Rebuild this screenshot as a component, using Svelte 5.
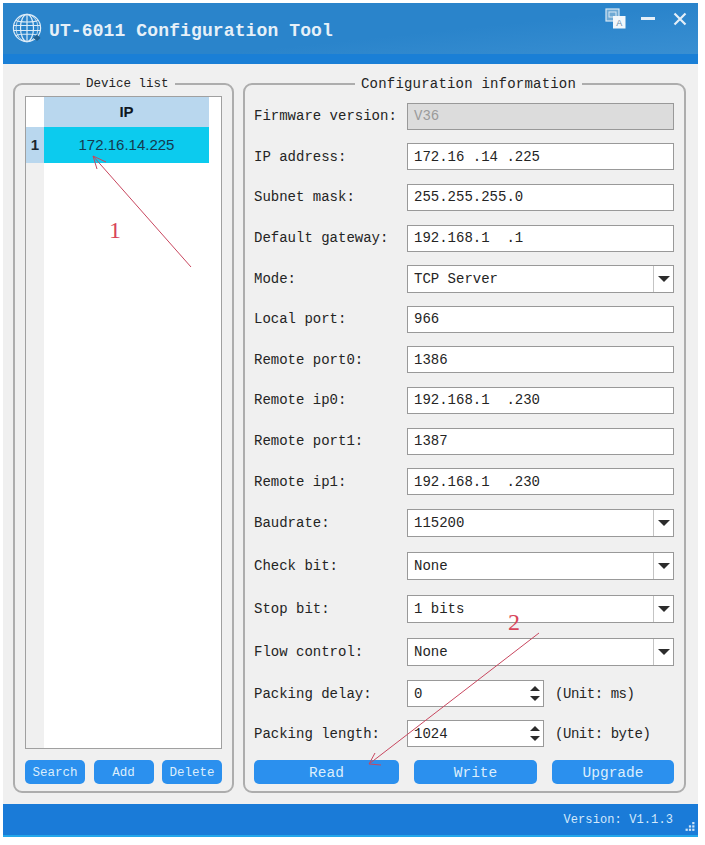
<script lang="ts">
	type Field = { label: string; value: string; kind?: 'text' | 'select' | 'spin' | 'disabled'; unit?: string; tall?: boolean };

	const fields: Field[] = [
		{ label: 'Firmware version:', value: 'V36', kind: 'disabled' },
		{ label: 'IP address:', value: '172.16 .14 .225' },
		{ label: 'Subnet mask:', value: '255.255.255.0' },
		{ label: 'Default gateway:', value: '192.168.1  .1' },
		{ label: 'Mode:', value: 'TCP Server', kind: 'select' },
		{ label: 'Local port:', value: '966' },
		{ label: 'Remote port0:', value: '1386' },
		{ label: 'Remote ip0:', value: '192.168.1  .230' },
		{ label: 'Remote port1:', value: '1387' },
		{ label: 'Remote ip1:', value: '192.168.1  .230' },
		{ label: 'Baudrate:', value: '115200', kind: 'select', tall: true },
		{ label: 'Check bit:', value: 'None', kind: 'select', tall: true },
		{ label: 'Stop bit:', value: '1 bits', kind: 'select', tall: true },
		{ label: 'Flow control:', value: 'None', kind: 'select', tall: true },
		{ label: 'Packing delay:', value: '0', kind: 'spin', unit: '(Unit: ms)' },
		{ label: 'Packing length:', value: '1024', kind: 'spin', unit: '(Unit: byte)' }
	];
</script>

<div class="window">
	<header class="titlebar">
		<svg class="globe" viewBox="0 0 30 30" fill="none" stroke="#dcebf7" stroke-width="1.2">
			<circle cx="15" cy="15" r="13.6" />
			<ellipse cx="15" cy="15" rx="6.5" ry="13.6" />
			<ellipse cx="15" cy="15" rx="11" ry="13.6" stroke-width="0.8" />
			<path d="M15 1.4v27.2M4 7.5c5 2 17 2 22 0M1.8 12.5h26.4M1.8 17.5h26.4M4 22.5c5-2 17-2 22 0" />
			<path d="M21 24.5l4-3 3.5 3.5-3.5 3z" fill="#23608f" stroke="none" />
		</svg>
		<h1>UT-6011 Configuration Tool</h1>
		<div class="controls">
			<svg width="21" height="21" viewBox="0 0 21 21">
				<rect x="1" y="1" width="13" height="12" fill="#6fa9d4" stroke="#d8e8f4" stroke-width="1.2" />
				<rect x="4" y="4" width="7" height="5" fill="none" stroke="#d8e8f4" />
				<rect x="8" y="8" width="12.5" height="12.5" fill="#f2f7fb" />
				<text x="14.2" y="18" text-anchor="middle" class="glyph">A</text>
			</svg>
			<svg width="14" height="5" viewBox="0 0 14 5"><rect y="1" width="14" height="3" fill="#e4eff8" /></svg>
			<svg width="14" height="14" viewBox="0 0 14 14"><path d="M1.5 1.5l11 11M12.5 1.5l-11 11" stroke="#e4eff8" stroke-width="2.2" /></svg>
		</div>
	</header>

	<main class="body">
		<fieldset class="group devices">
			<legend>Device list</legend>
			<div class="table">
				<div class="gutter">
					<div class="corner"></div>
					<div class="rownum">1</div>
				</div>
				<div class="col">
					<div class="colhead">IP</div>
					<div class="cell">172.16.14.225</div>
				</div>
			</div>
			<div class="btnrow">
				<button>Search</button>
				<button>Add</button>
				<button>Delete</button>
			</div>
		</fieldset>

		<fieldset class="group config">
			<legend>Configuration information</legend>
			<div class="rows">
				{#each fields as f}
					<div class="row" class:tall={f.tall} class:short={f.kind === 'spin'}>
						<span class="label">{f.label}</span>
						{#if f.kind === 'select'}
							<div class="input select">
								<span class="val">{f.value}</span>
								<span class="drop"><i class="down"></i></span>
							</div>
						{:else if f.kind === 'spin'}
							<div class="input spin">
								<span class="val">{f.value}</span>
								<span class="arrows"><i class="up"></i><i class="down"></i></span>
							</div>
							<span class="unit">{f.unit}</span>
						{:else}
							<div class="input" class:disabled={f.kind === 'disabled'}>
								<span class="val">{f.value}</span>
							</div>
						{/if}
					</div>
				{/each}
			</div>
			<div class="actions">
				<button class="read">Read</button>
				<button class="write">Write</button>
				<button class="upgrade">Upgrade</button>
			</div>
		</fieldset>
	</main>

	<footer class="statusbar">
		<span>Version: V1.1.3</span>
		<svg class="grip" width="10" height="10" viewBox="0 0 9 9" fill="#cfe4f7">
			<rect x="6.5" y="0" width="2" height="2" />
			<rect x="3.5" y="3" width="2" height="2" />
			<rect x="6.5" y="3" width="2" height="2" />
			<rect x="0.5" y="6" width="2" height="2" />
			<rect x="3.5" y="6" width="2" height="2" />
			<rect x="6.5" y="6" width="2" height="2" />
		</svg>
	</footer>

	<svg class="marks" width="705" height="845" viewBox="0 0 705 845" fill="none" stroke="#c8475f" stroke-width="1">
		<path d="M191 267L93 156M93 156l4 13M93 156l13 6" />
		<path d="M539 633L369 764M369 764l6-11M369 764l12 1" />
		<text x="109" y="238" class="num">1</text>
		<text x="508" y="630" class="num">2</text>
	</svg>
</div>

<style>
	:global(body) {
		margin: 0;
		background: #fff;
	}

	.window {
		box-sizing: border-box;
		width: 695px;
		height: 834px;
		margin: 3px 0 0 3px;
		display: flex;
		flex-direction: column;
		background: #f0f0f0;
		font-family: 'Liberation Mono', 'DejaVu Sans Mono', monospace;
		font-size: 14px;
		color: #242424;
	}

	.titlebar {
		height: 61px;
		flex-shrink: 0;
		box-sizing: border-box;
		display: flex;
		align-items: flex-start;
		padding: 10px 11px 0 9px;
		background:
			linear-gradient(to bottom, transparent 51px, #1a7fd6 51px),
			linear-gradient(174deg, #2a84cb 55%, #3c91d3 100%);
	}

	.globe {
		width: 30px;
		height: 30px;
		flex-shrink: 0;
	}

	h1 {
		margin: 8px 0 0 7px;
		font-size: 18px;
		font-weight: 700;
		line-height: 20px;
		letter-spacing: 0.12px;
		color: #e6f0f8;
		white-space: nowrap;
	}

	.controls {
		margin-left: auto;
		margin-top: -5px;
		display: flex;
		align-items: center;
		gap: 16px;
		height: 21px;
	}

	.controls svg:first-child {
		margin-right: -1px;
	}

	.controls svg:last-child {
		margin-left: 2px;
	}

	.glyph {
		font-family: 'Liberation Sans', sans-serif;
		font-size: 9px;
		fill: #6f8ea6;
	}

	.body {
		flex: 1;
		min-height: 0;
		display: flex;
		gap: 9px;
		padding: 12px 12px 11px 10px;
	}

	.group {
		box-sizing: border-box;
		margin: 0;
		min-width: 0;
		border: 2px solid #adadad;
		border-radius: 9px;
		display: flex;
		flex-direction: column;
	}

	legend {
		padding: 0 6px;
		line-height: 16px;
		letter-spacing: 0.2px;
		white-space: nowrap;
	}

	.devices {
		width: 221px;
		padding: 4px 10px 7px;
	}

	.devices legend {
		margin-left: 55px;
		font-size: 12.5px;
		letter-spacing: 0;
	}

	.config {
		flex: 1;
		padding: 4px 10px 7px 9px;
	}

	.config legend {
		margin-left: 101px;
	}

	.table {
		flex: 1;
		display: flex;
		box-sizing: border-box;
		background: #fff;
		border: 1px solid #a0a0a0;
		font-family: 'Liberation Sans', sans-serif;
		font-size: 15px;
	}

	.gutter {
		width: 18px;
		background: #f0f0f0;
	}

	.corner {
		height: 30px;
		background: #fff;
	}

	.rownum {
		height: 36px;
		line-height: 36px;
		text-align: center;
		font-weight: 700;
		color: #1c2730;
		background: #b9d7ee;
	}

	.col {
		width: 165px;
	}

	.colhead {
		height: 30px;
		line-height: 30px;
		text-align: center;
		font-weight: 700;
		color: #10181f;
		background: #b9d7ee;
	}

	.cell {
		height: 36px;
		line-height: 36px;
		text-align: center;
		color: #143a50;
		background: #0ccbee;
	}

	.btnrow {
		margin-top: 11px;
		display: flex;
		justify-content: space-between;
	}

	button {
		height: 24px;
		padding: 1px 0 0;
		border: 0;
		border-radius: 5px;
		background: #2b90ee;
		color: #dceefc;
		font: inherit;
		font-size: 12.5px;
	}

	.btnrow button {
		width: 60px;
	}

	.rows {
		flex: 1;
	}

	.row {
		height: 40.6px;
		display: flex;
		align-items: center;
	}

	.row.tall {
		height: 43px;
	}

	.row.short {
		height: 40px;
	}

	.label {
		width: 153px;
		flex-shrink: 0;
		white-space: nowrap;
	}

	.input {
		box-sizing: border-box;
		flex: 1;
		height: 27px;
		display: flex;
		align-items: center;
		padding-left: 6px;
		background: #fff;
		border: 1px solid #999;
	}

	.val {
		white-space: pre;
	}

	.input.disabled {
		background: #dcdcdc;
		color: #9a9a9a;
	}

	.select {
		height: 28px;
		padding-right: 0;
	}

	.drop {
		margin-left: auto;
		width: 19px;
		height: 100%;
		display: flex;
		align-items: center;
		justify-content: center;
		border-left: 1px solid #c4c4c4;
	}

	.down,
	.up {
		display: block;
		width: 0;
		height: 0;
		border-left: 5px solid transparent;
		border-right: 5px solid transparent;
	}

	.down {
		border-top: 5px solid #2c2c2c;
	}

	.drop .down {
		border-left-width: 6px;
		border-right-width: 6px;
		border-top-width: 6px;
	}

	.up {
		border-bottom: 5px solid #2c2c2c;
	}

	.spin {
		flex: 0 0 137px;
	}

	.arrows {
		margin-left: auto;
		margin-right: 3px;
		display: flex;
		flex-direction: column;
		gap: 5px;
	}

	.unit {
		margin-left: 11px;
		letter-spacing: -0.45px;
		white-space: nowrap;
	}

	.actions {
		display: flex;
		gap: 15px;
	}

	.actions button {
		font-size: 14.5px;
	}

	.read {
		width: 145px;
	}

	.write {
		width: 123px;
	}

	.upgrade {
		width: 122px;
	}

	.statusbar {
		height: 33px;
		flex-shrink: 0;
		box-sizing: border-box;
		position: relative;
		display: flex;
		align-items: center;
		justify-content: flex-end;
		padding: 0 25px 0 0;
		background: #1a7bd8;
		border-bottom: 2px solid #23a6ea;
		color: #d4e9fb;
		font-size: 12px;
		letter-spacing: 0.1px;
	}

	.grip {
		position: absolute;
		right: 3px;
		bottom: 3px;
	}

	.marks {
		position: absolute;
		left: 0;
		top: 0;
		pointer-events: none;
	}

	.num {
		font-family: 'Liberation Serif', serif;
		font-size: 24px;
		fill: #d8455a;
		stroke: none;
	}
</style>
